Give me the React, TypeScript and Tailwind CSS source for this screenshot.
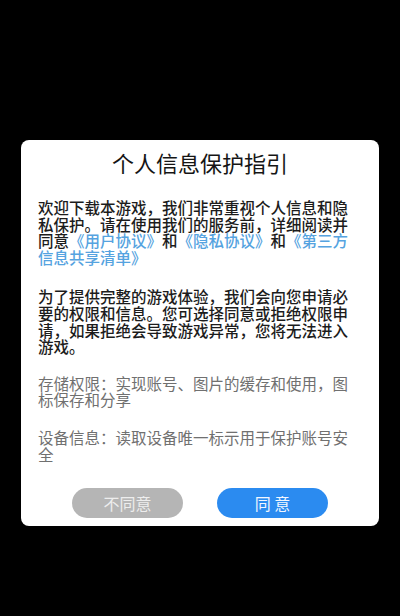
export default function App() {
  const link = 'text-[#55a3e0]'

  return (
    <div
      className="flex h-[616px] w-[400px] items-start justify-center bg-black pt-[140px]"
      style={{ fontFamily: '"Noto Sans CJK SC", "Noto Sans", sans-serif' }}
    >
      <div className="w-[358px] rounded-[8px] bg-white pb-[8px] pt-[11px]">
        {/* Title */}
        <h1 className="text-center text-[22px] font-normal leading-[22px] text-[#151515]">
          个人信息保护指引
        </h1>

        {/* Body */}
        <div className="mt-[26px] pl-[17px] pr-[23px] text-[15.5px] leading-[16.6px]">
          <p className="font-medium text-[#1c1c1c]">
            欢迎下载本游戏，我们非常重视个人信息和隐私保护。请在使用我们的服务前，详细阅读并同意
            <span className={link}>《用户协议》</span>和
            <span className={link}>《隐私协议》</span>和
            <span className={link}>《第三方信息共享清单》</span>
          </p>

          <p className="mt-[23px] font-medium text-[#1c1c1c]">
            为了提供完整的游戏体验，我们会向您申请必要的权限和信息。您可选择同意或拒绝权限申请，如果拒绝会导致游戏异常，您将无法进入游戏。
          </p>

          <p className="mt-[20px] text-[#707070]">
            存储权限：实现账号、图片的缓存和使用，图标保存和分享
          </p>

          <p className="mt-[21px] text-[#707070]">
            设备信息：读取设备唯一标示用于保护账号安全
          </p>
        </div>

        {/* Buttons */}
        <div className="mt-[26px] flex justify-center gap-[34px]">
          <button className="h-[30px] w-[111px] rounded-full bg-[#b5b5b5] text-[16px] leading-none text-[#ededed]">
            不同意
          </button>
          <button className="h-[30px] w-[111px] rounded-full bg-[#2b8bf0] text-[16px] leading-none text-[#f2f7ff]">
            同 意
          </button>
        </div>
      </div>
    </div>
  )
}
